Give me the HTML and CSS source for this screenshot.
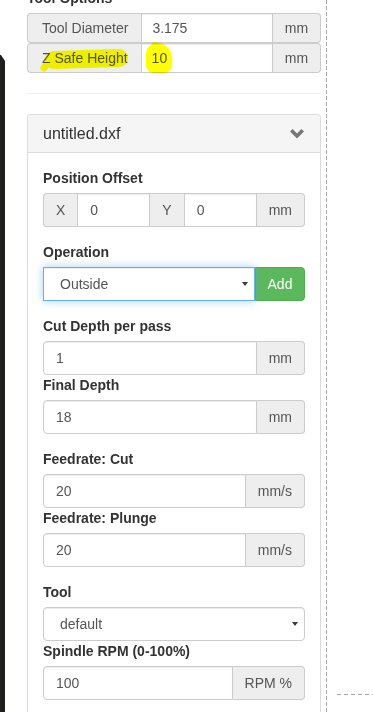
FILE: index.html
```
<!DOCTYPE html>
<html lang="en">
<head>
    <meta charset="UTF-8">
    <meta name="viewport" content="width=device-width, initial-scale=1.0">
    <title>CAM</title>
    <link rel="stylesheet" href="styles.css">
</head>
<body>
    <div class="page">
        <div class="strip"></div>
        <div class="sidebar">
            <label class="top-label">Tool Options</label>
            <div class="tool-options">
                <div class="input-group input-group-sm">
                    <span class="addon addon-wide">Tool Diameter</span>
                    <input type="text" class="form-control" value="3.175">
                    <span class="addon addon-unit">mm</span>
                </div>
                <div class="input-group input-group-sm">
                    <span class="addon addon-wide">Z Safe Height</span>
                    <input type="text" class="form-control" value="10">
                    <span class="addon addon-unit">mm</span>
                </div>
                <!-- marker highlights -->
                <svg class="marker" width="294" height="62" viewBox="0 0 294 62">
                    <path d="M27 47 L92 45" stroke="#ffff00" stroke-width="18" stroke-linecap="round" fill="none"/>
                    <path d="M17 55 Q21 49 30 45" stroke="#ffff00" stroke-width="7" stroke-linecap="round" fill="none"/>
                    <path d="M124 32 Q125 29 129 29 L131 30 Q139 31 143 37 Q146 44 145 52 Q144 59 138 60 L126 60 Q119 59 119 51 L119 40 Q120 34 124 32 Z" fill="#ffff00"/>
                </svg>
            </div>
            <hr>
            <div class="panel">
                <div class="panel-heading">
                    <span class="panel-title">untitled.dxf</span>
                    <svg class="chevron" width="14" height="10" viewBox="0 0 14 10">
                        <polygon points="0,2.6 2.6,0 7,4.4 11.4,0 14,2.6 7,9.6" fill="#777"/>
                    </svg>
                </div>
                <div class="panel-body">
                    <div class="form-group">
                        <label>Position Offset</label>
                        <div class="input-group">
                            <span class="addon">X</span>
                            <input type="text" class="form-control" value="0">
                            <span class="addon">Y</span>
                            <input type="text" class="form-control" value="0">
                            <span class="addon">mm</span>
                        </div>
                    </div>
                    <div class="form-group">
                        <label>Operation</label>
                        <div class="input-group">
                            <div class="select-wrap focused">
                                <select class="form-control">
                                    <option>Outside</option>
                                    <option>Inside</option>
                                    <option>Pocket</option>
                                </select>
                            </div>
                            <button class="btn-add">Add</button>
                        </div>
                    </div>
                    <div class="form-group">
                        <label>Cut Depth per pass</label>
                        <div class="input-group">
                            <input type="text" class="form-control" value="1">
                            <span class="addon">mm</span>
                        </div>
                        <label>Final Depth</label>
                        <div class="input-group">
                            <input type="text" class="form-control" value="18">
                            <span class="addon">mm</span>
                        </div>
                    </div>
                    <div class="form-group">
                        <label>Feedrate: Cut</label>
                        <div class="input-group">
                            <input type="text" class="form-control" value="20">
                            <span class="addon">mm/s</span>
                        </div>
                        <label>Feedrate: Plunge</label>
                        <div class="input-group">
                            <input type="text" class="form-control" value="20">
                            <span class="addon">mm/s</span>
                        </div>
                    </div>
                    <div class="form-group">
                        <label>Tool</label>
                        <div class="select-wrap single">
                            <select class="form-control">
                                <option>default</option>
                            </select>
                        </div>
                        <label>Spindle RPM (0-100%)</label>
                        <div class="input-group">
                            <input type="text" class="form-control" value="100">
                            <span class="addon">RPM %</span>
                        </div>
                    </div>
                </div>
            </div>
        </div>
        <div class="divider"></div>
        <div class="viewer">
            <div class="dash-h"></div>
        </div>
    </div>
</body>
</html>
```
FILE: styles.css
```
html,
body{
    margin: 0px;
    padding: 0px;
    height: 712px;
    overflow: hidden;
    background: #ffffff;
}
body{
    font-family: "Liberation Sans", Arial, sans-serif;
    font-size: 14px;
    color: #333333;
}
.page{
    display: flex;
    align-items: flex-start;
}
.strip{
    width: 5px;
    height: 700px;
    margin-top: 55px;
    background: #1f201e;
    clip-path: polygon(0 0, 1px 0, 5px 6px, 5px 100%, 0 100%);
}
.sidebar{
    width: 294px;
    padding: 0px 5px 0px 22px;
    flex-shrink: 0;
}
label{
    display: block;
    font-weight: bold;
    line-height: 20px;
    height: 20px;
    margin-bottom: 5px;
    color: #333333;
}
.top-label{
    margin-top: -12px;
}
.tool-options{
    position: relative;
}
.marker{
    position: absolute;
    left: 0px;
    top: 0px;
    mix-blend-mode: multiply;
    pointer-events: none;
}
hr{
    margin: 20px 0px;
    border: 0px;
    border-top: 1px solid #eeeeee;
    height: 0px;
}
.input-group{
    display: flex;
    height: 34px;
}
.input-group-sm{
    height: 30px;
}
.form-control{
    flex: 1;
    min-width: 0px;
    box-sizing: border-box;
    height: 100%;
    padding: 6px 12px;
    font-family: inherit;
    font-size: 14px;
    color: #555555;
    background: #ffffff;
    border: 1px solid #cccccc;
    border-radius: 4px;
    box-shadow: inset 0 1px 1px rgba(0,0,0,.075);
    outline: none;
}
.input-group-sm .form-control{
    padding: 4px 10px;
}
.input-group .form-control{
    border-radius: 0px;
}
.input-group > .form-control:first-child{
    border-radius: 4px 0px 0px 4px;
}
.addon{
    display: flex;
    align-items: center;
    justify-content: center;
    box-sizing: border-box;
    padding: 0px 12px;
    background: #eeeeee;
    color: #555555;
    border: 1px solid #cccccc;
    white-space: nowrap;
}
.addon:first-child{
    border-radius: 4px 0px 0px 4px;
    border-right: 0px;
}
.addon:last-child{
    border-radius: 0px 4px 4px 0px;
    border-left: 0px;
}
.addon + .form-control + .addon:not(:last-child){
    border-left: 0px;
    border-right: 0px;
}
.addon-wide{
    padding: 0px 13px 0px 14px;
}
.addon-unit{
    width: 48px;
    padding: 0px;
}
.panel{
    border: 1px solid #dddddd;
    border-radius: 4px 4px 0px 0px;
    border-bottom: 0px;
    background: #ffffff;
}
.panel-heading{
    display: flex;
    align-items: center;
    justify-content: space-between;
    padding: 10px 15px;
    height: 17px;
    background: #f5f5f5;
    border-bottom: 1px solid #dddddd;
    border-radius: 3px 3px 0px 0px;
}
.panel-title{
    font-size: 16px;
    line-height: 17px;
    color: #333333;
}
.chevron{
    margin-right: 1px;
    margin-top: 1px;
}
.panel-body{
    padding: 15px;
    height: 600px;
}
.form-group{
    margin-bottom: 15px;
}
.select-wrap{
    position: relative;
    flex: 1;
    display: flex;
    height: 34px;
}
.select-wrap::after{
    content: "";
    position: absolute;
    right: 7px;
    top: 15px;
    border-left: 3px solid transparent;
    border-right: 3px solid transparent;
    border-top: 4px solid #3a3a3a;
}
.select-wrap select{
    -webkit-appearance: none;
    appearance: none;
    padding-left: 16px;
    border-radius: 4px;
}
.focused select{
    border-radius: 4px 0px 0px 4px;
    border-color: #66afe9;
    box-shadow: inset 0 1px 1px rgba(0,0,0,.075), 0 0 8px rgba(102,175,233,.6);
    position: relative;
}
.btn-add{
    width: 50px;
    flex-shrink: 0;
    font-family: inherit;
    font-size: 14px;
    color: #ffffff;
    background: #5cb85c;
    border: 1px solid #4cae4c;
    border-radius: 0px 4px 4px 0px;
    padding: 0px;
}
.divider{
    width: 1px;
    height: 712px;
    flex-shrink: 0;
    background: repeating-linear-gradient(to bottom, #aaaaaa 0px, #aaaaaa 4px, transparent 4px, transparent 6px);
}
.viewer{
    flex: 1;
}
.dash-h{
    margin: 694px 0px 0px 10px;
    height: 1px;
    background: repeating-linear-gradient(to right, #aaaaaa 0px, #aaaaaa 4px, transparent 4px, transparent 7px);
}
```
